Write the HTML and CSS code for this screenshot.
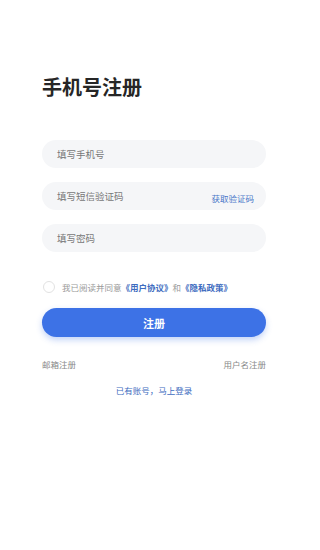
FILE: index.html
```html
<!DOCTYPE html>
<html lang="zh">
<head>
<meta charset="utf-8">
<link rel="stylesheet" href="styles.css">
</head>
<body>
<main class="page">
  <h1 class="title">手机号注册</h1>
  <div class="fields">
    <div class="field"><span class="ph">填写手机号</span></div>
    <div class="field"><span class="ph">填写短信验证码</span><span class="code">获取验证码</span></div>
    <div class="field"><span class="ph">填写密码</span></div>
  </div>
  <div class="agree">
    <span class="radio"></span>
    <span class="agree-text">我已阅读并同意<b class="link">《用户协议》</b>和<b class="link">《隐私政策》</b></span>
  </div>
  <button class="submit">注册</button>
  <div class="alt">
    <span>邮箱注册</span>
    <span>用户名注册</span>
  </div>
  <div class="login">已有账号，马上登录</div>
</main>
</body>
</html>
```
FILE: styles.css
```css
* { box-sizing: border-box; }
html, body { margin: 0; padding: 0; background: #fff; }
body {
  font-family: "Noto Sans CJK SC", "Noto Sans", sans-serif;
  width: 309px;
  height: 550px;
}
.page {
  padding: 73px 43px 0 42px;
  display: flex;
  flex-direction: column;
}
.title {
  margin: 0;
  font-size: 20px;
  line-height: 28px;
  font-weight: 700;
  color: #262626;
}
.fields {
  margin-top: 39px;
  display: flex;
  flex-direction: column;
  gap: 14px;
}
.field {
  height: 28px;
  border-radius: 14px;
  background: #f5f6f8;
  display: flex;
  align-items: center;
  justify-content: space-between;
  padding: 0 12px 0 15px;
}
.ph {
  font-size: 9.5px;
  color: #777;
}
.code {
  font-size: 8.5px;
  color: #4a76c8;
  margin-top: 4px;
}
.agree {
  margin-top: 28px;
  display: flex;
  align-items: center;
  gap: 7px;
  padding-left: 1px;
  height: 14px;
}
.radio {
  width: 12px;
  height: 12px;
  border-radius: 50%;
  border: 1px solid #e2e2e2;
}
.agree-text {
  font-size: 8.5px;
  color: #999;
}
.link {
  color: #3e6cc0;
  font-weight: 700;
}
.submit {
  margin-top: 14px;
  height: 29px;
  border: none;
  border-radius: 15px;
  background: #3d72e6;
  color: #fff;
  font-family: inherit;
  font-size: 11px;
  font-weight: 700;
  box-shadow: 0 3px 6px rgba(61, 114, 230, 0.3);
  padding: 0;
}
.alt {
  margin-top: 21px;
  display: flex;
  justify-content: space-between;
  font-size: 8.5px;
  color: #888;
  line-height: 12px;
}
.login {
  margin-top: 14px;
  text-align: center;
  font-size: 8.5px;
  color: #3e6cc0;
  line-height: 12px;
}
```
